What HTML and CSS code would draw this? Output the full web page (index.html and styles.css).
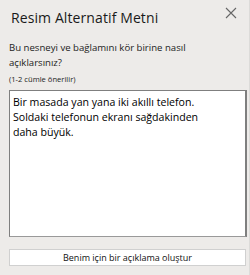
FILE: index.html
```html
<!DOCTYPE html>
<html lang="tr">
<head>
<meta charset="utf-8">
<link rel="stylesheet" href="styles.css">
</head>
<body>
<div class="pane">
  <div class="header">
    <h1 class="title">Resim Alternatif Metni</h1>
    <svg class="close" width="12" height="12" viewBox="0 0 12 12"><path d="M1 1L11 11M11 1L1 11" stroke="#666" stroke-width="1.1" fill="none"/></svg>
  </div>
  <p class="question">Bu nesneyi ve bağlamını kör birine nasıl açıklarsınız?</p>
  <p class="hint">(1-2 cümle önerilir)</p>
  <div class="textbox">Bir masada yan yana iki akıllı telefon.<br>Soldaki telefonun ekranı sağdakinden<br>daha büyük.</div>
  <button class="gen">Benim için bir açıklama oluştur</button>
</div>
</body>
</html>
```
FILE: styles.css
```css
html, body { margin: 0; padding: 0; }
body {
  width: 250px;
  height: 275px;
  background: #edebe9;
  font-family: "Open Sans", "Noto Sans", sans-serif;
  color: #222;
  overflow: hidden;
}
.pane {
  height: 275px;
  box-sizing: border-box;
  padding: 0 3px 0 9px;
  display: flex;
  flex-direction: column;
  border-right: 1px solid #dcdbd9;
}
.header {
  display: flex;
  justify-content: space-between;
  align-items: center;
  height: 34px;
  padding-right: 9px;
}
.title {
  margin: 0 0 0 2px;
  font-weight: normal;
  font-size: 14px;
  letter-spacing: 0.1px;
  color: #1a1a1a;
}
.close { margin-top: -8px; }
.question {
  margin: 6px 0 0 0;
  font-size: 9.6px;
  line-height: 15px;
  width: 185px;
}
.hint {
  margin: 4px 0 0 0;
  font-size: 7.6px;
  line-height: 10px;
}
.textbox {
  margin-top: 6px;
  height: 137px;
  background: #fff;
  border: 1px solid #7f7f7f;
  border-right-width: 2px;
  border-bottom-color: #999;
  padding: 4px 3px;
  font-size: 10.6px;
  line-height: 15px;
  width: 229px;
  white-space: nowrap;
  color: #000;
}
.gen {
  margin-top: 12px;
  width: 237px;
  height: 17px;
  background: #fff;
  border: 1px solid #d0d0d0;
  font-family: "Open Sans", "Noto Sans", sans-serif;
  font-size: 9px;
  color: #111;
  padding: 0;
}
```
